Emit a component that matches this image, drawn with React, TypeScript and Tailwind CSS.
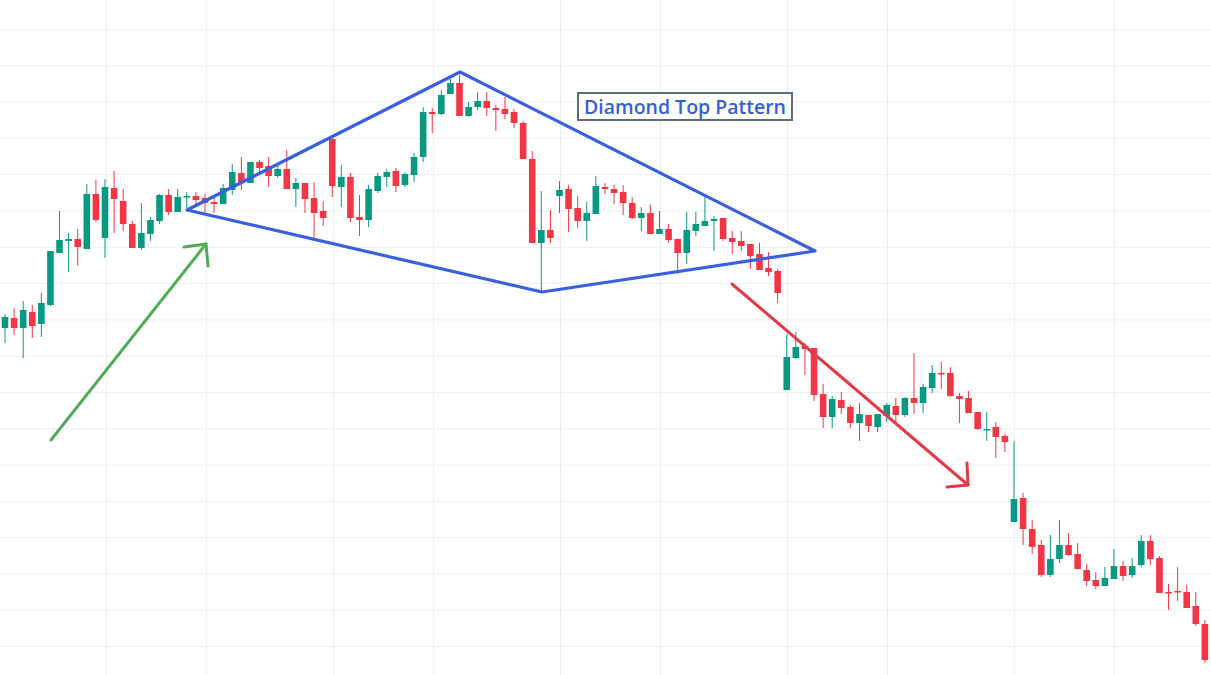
// Diamond top pattern chart, drawn as one svg with a text label on top.

type Candle = [up: 0 | 1, bodyTop: number, bodyBottom: number, wickTop: number, wickBottom: number];

// y values are in pixels; up = 1 for green, 0 for red
const CANDLES: Candle[] = [
  [1, 317, 328, 314, 343], [0, 318, 328, 308, 335], [1, 310, 328, 301, 358], [0, 312, 326, 305, 338],
  [1, 303, 324, 293, 337], [1, 251, 305, 251, 306], [1, 240, 253, 211, 253], [1, 239, 241, 233, 272],
  [0, 239, 247, 229, 266], [1, 194, 249, 184, 249], [0, 194, 220, 180, 222], [1, 187, 238, 179, 258],
  [0, 188, 199, 171, 233], [0, 201, 224, 189, 231], [0, 224, 248, 221, 248], [1, 233, 248, 203, 250],
  [1, 220, 234, 217, 241], [1, 195, 221, 194, 224], [0, 195, 212, 189, 215], [1, 197, 212, 189, 212],
  [1, 196, 197, 192, 208], [0, 196, 200, 192, 207], [0, 198, 203, 194, 215], [0, 202, 204, 197, 213],
  [1, 188, 204, 184, 204], [1, 172, 190, 164, 195], [0, 173, 182, 157, 190], [1, 162, 183, 162, 183],
  [0, 162, 168, 160, 173], [0, 166, 176, 157, 187], [1, 169, 176, 166, 178], [0, 169, 189, 150, 189],
  [1, 183, 189, 178, 207], [0, 183, 199, 183, 213], [0, 198, 213, 182, 240], [0, 211, 218, 201, 226],
  [0, 139, 186, 137, 197], [1, 177, 187, 165, 207], [0, 177, 218, 173, 222], [0, 217, 220, 195, 236],
  [1, 189, 220, 185, 227], [1, 176, 191, 173, 193], [1, 172, 177, 169, 187], [0, 171, 186, 168, 192],
  [1, 174, 185, 172, 187], [1, 157, 175, 153, 182], [1, 112, 157, 107, 162], [0, 112, 114, 108, 133],
  [1, 95, 114, 90, 115], [1, 83, 94, 79, 94], [0, 83, 116, 75, 116], [1, 107, 116, 102, 117],
  [1, 101, 107, 92, 110], [0, 101, 108, 92, 116], [0, 108, 110, 105, 131], [0, 109, 114, 97, 119],
  [0, 112, 123, 109, 128], [0, 123, 159, 121, 159], [0, 159, 243, 151, 243], [1, 230, 243, 191, 292],
  [0, 230, 238, 210, 243], [1, 190, 196, 181, 213], [0, 189, 209, 185, 232], [0, 208, 221, 196, 228],
  [1, 213, 221, 202, 241], [1, 186, 214, 176, 214], [0, 187, 189, 183, 194], [0, 189, 193, 185, 204],
  [0, 192, 203, 185, 215], [0, 203, 218, 197, 219], [1, 213, 218, 207, 231], [0, 213, 234, 205, 234],
  [1, 229, 234, 211, 234], [0, 229, 240, 224, 243], [0, 239, 253, 239, 274], [1, 230, 253, 212, 264],
  [1, 224, 231, 212, 236], [1, 221, 226, 197, 226], [1, 219, 221, 216, 251], [0, 218, 239, 218, 241],
  [0, 238, 242, 231, 254], [0, 241, 246, 231, 251], [0, 244, 256, 244, 269], [0, 254, 270, 243, 270],
  [0, 268, 272, 252, 276], [0, 271, 293, 269, 303], [1, 357, 390, 334, 390], [1, 347, 358, 332, 359],
  [0, 346, 349, 343, 375], [0, 348, 395, 348, 401], [0, 394, 417, 384, 428], [1, 399, 417, 396, 428],
  [0, 400, 408, 392, 414], [0, 407, 423, 405, 428], [1, 414, 423, 403, 441], [0, 415, 426, 415, 432],
  [1, 414, 427, 414, 432], [1, 405, 416, 403, 422], [0, 406, 415, 398, 422], [1, 398, 415, 397, 417],
  [0, 398, 403, 353, 414], [1, 387, 403, 384, 413], [1, 373, 388, 365, 393], [0, 373, 374, 362, 389],
  [0, 373, 396, 367, 397], [0, 396, 399, 393, 423], [0, 398, 413, 391, 413], [0, 412, 429, 412, 430],
  [1, 429, 430, 412, 441], [0, 427, 437, 422, 458], [0, 436, 442, 434, 452], [1, 499, 522, 441, 522],
  [0, 498, 529, 493, 545], [0, 529, 547, 520, 554], [0, 545, 575, 540, 577], [1, 559, 575, 535, 577],
  [1, 545, 559, 520, 563], [0, 545, 555, 533, 556], [0, 554, 569, 543, 569], [0, 570, 581, 564, 586],
  [0, 580, 586, 572, 589], [1, 578, 586, 567, 586], [1, 566, 579, 549, 579], [0, 566, 576, 561, 581],
  [1, 566, 575, 558, 578], [1, 541, 565, 535, 567], [0, 541, 559, 535, 565], [0, 558, 593, 556, 593],
  [0, 592, 593, 584, 610], [0, 591, 592, 567, 601], [0, 592, 608, 585, 608], [0, 606, 624, 592, 626],
  [0, 624, 660, 620, 663],
];

const GRID_X = [106, 206, 333, 433, 560, 660, 787, 887, 1014, 1114];
const GRID_Y = Array.from({ length: 18 }, (_, i) => 29.5 + i * 36.3);

const UP = '#089981';
const DOWN = '#f23645';

function CandleChart() {
  return (
    <svg width="1211" height="675" viewBox="0 0 1211 675" className="block">
      {/* grid */}
      <g stroke="#eceef2" strokeWidth="1">
        {GRID_Y.map(y => <line key={`h${y}`} x1="0" x2="1211" y1={y} y2={y} />)}
        {GRID_X.map(x => <line key={`v${x}`} x1={x + 0.5} x2={x + 0.5} y1="0" y2="675" />)}
      </g>

      {/* candles */}
      {CANDLES.map(([up, bt, bb, wt, wb], i) => {
        const cx = 5 + i * 9.09;
        const color = up ? UP : DOWN;
        return (
          <g key={i} fill={color}>
            <rect x={cx - 0.5} y={wt} width="1" height={wb - wt} />
            <rect x={cx - 3.3} y={bt} width="6.6" height={Math.max(bb - bt, 1.5)} />
          </g>
        );
      })}

      {/* diamond */}
      <polygon
        points="187,210 460,72 815,251 542,292"
        fill="none"
        stroke="#3a60e0"
        strokeWidth="3.2"
        strokeLinejoin="round"
      />

      {/* green arrow */}
      <g stroke="#52ab57" strokeWidth="3" strokeLinecap="round" fill="none">
        <line x1="51" y1="440" x2="206" y2="244" />
        <polyline points="184,247 206,244 208,266" strokeLinejoin="round" />
      </g>

      {/* red arrow */}
      <g stroke="#e13a48" strokeWidth="3" strokeLinecap="round" fill="none">
        <line x1="732" y1="284" x2="968" y2="485" />
        <polyline points="947,487 968,485 967,463" strokeLinejoin="round" />
      </g>
    </svg>
  );
}

export default function App() {
  return (
    <div className="relative w-[1211px] h-[675px] overflow-hidden bg-white">
      <CandleChart />
      <div
        className="absolute left-[577px] top-[92px] flex h-[29px] w-[216px] items-center justify-center border-2 border-[#5d6b78] bg-white text-[19.5px] font-semibold leading-none text-[#3560d2]"
        style={{ fontFamily: '"Open Sans", "Noto Sans", sans-serif' }}
      >
        Diamond Top Pattern
      </div>
    </div>
  );
}
